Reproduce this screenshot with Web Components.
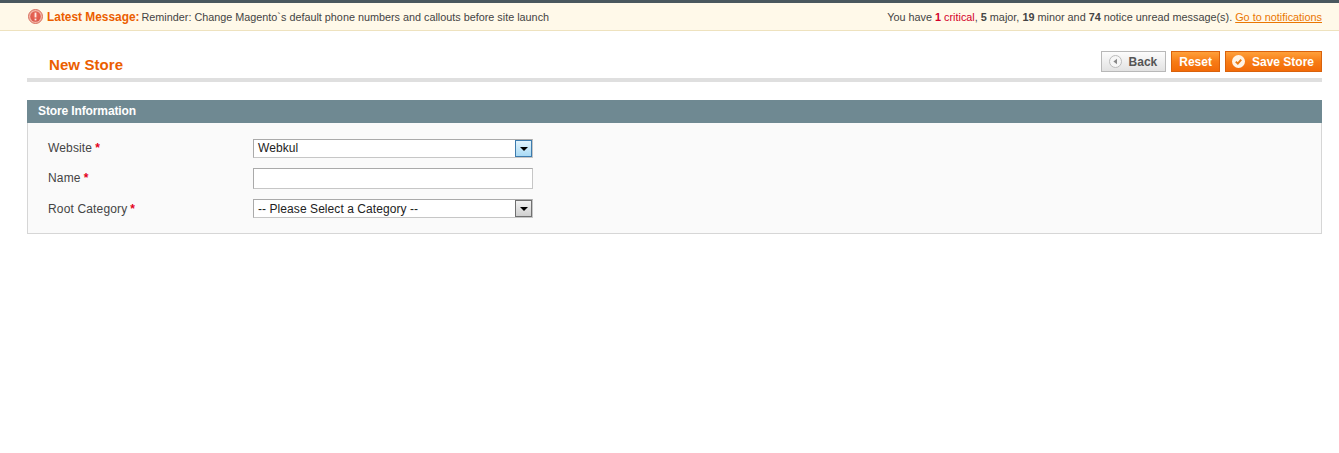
<!DOCTYPE html>
<html lang="en"><head><meta charset="utf-8"><title>New Store</title>
<style>
html,body{margin:0;padding:0;background:#fff}
body{font:12px "Liberation Sans",Arial,sans-serif;color:#2f2f2f;height:453px;overflow:hidden}
</style></head><body>
<admin-notice></admin-notice>
<main-content></main-content>
<script>
function el(name,html){customElements.define(name,class extends HTMLElement{constructor(){super();this.attachShadow({mode:'open'}).innerHTML=typeof html==='function'?html(this):html;}});}
el('admin-notice',`<style>
:host{display:block;border-top:3px solid #4a585e;background:#fff9e9;border-bottom:1px solid #eee2be;font-size:10.85px;color:#444}
.w{display:flex;justify-content:space-between;align-items:center;height:27px;padding:0 17px 0 28px}
.l{display:flex;align-items:center}
svg{margin-right:4px}
b.t{color:#eb5e00;font-size:11.9px;margin-right:2px}
.l span{font-size:10.82px}
b{color:#444}.c{color:#d4002a}b.c{color:#d4002a}
a{color:#ea7601;text-decoration:underline}
</style><div class="w"><div class="l"><svg width="15" height="15" viewBox="0 0 15 15"><defs><radialGradient id="g" cx=".5" cy=".4" r=".6"><stop offset="0" stop-color="#ee6a5a"/><stop offset="1" stop-color="#d9564a"/></radialGradient></defs><circle cx="7.5" cy="7.5" r="7" fill="#f3b6a8" stroke="#d8705f"/><circle cx="7.5" cy="7.5" r="5.2" fill="url(#g)"/><rect x="6.6" y="3.6" width="1.8" height="4.8" fill="#fde9e4"/><rect x="6.6" y="9.6" width="1.8" height="1.8" fill="#fde9e4"/></svg><b class="t">Latest Message:</b><span>Reminder: Change Magento\`s default phone numbers and callouts before site launch</span></div>
<div>You have <b class="c">1</b> <span class="c">critical</span>, <b>5</b> major, <b>19</b> minor and <b>74</b> notice unread message(s). <a href="#">Go to notifications</a></div></div>`);
el('admin-button',t=>{const k=t.getAttribute('kind')||'';const icon=t.getAttribute('icon');
const ic=icon==='back'?`<svg width="13" height="13" viewBox="0 0 13 13"><circle cx="6.5" cy="6.5" r="6" fill="#f6f6f6" stroke="#bbb"/><path d="M8 3.8v5.4L4.4 6.5z" fill="#888"/></svg>`:icon==='save'?`<svg width="13" height="13" viewBox="0 0 13 13"><circle cx="6.5" cy="6.5" r="6.5" fill="#fff4e6"/><path d="M3.8 6.6l2 2 3.4-4" fill="none" stroke="#ea7a12" stroke-width="2"/></svg>`:'';
return `<style>
:host{display:inline-flex}
.b{display:flex;align-items:center;height:19px;border:1px solid #d9620c;background:linear-gradient(#ffa03a,#f77c16 50%,#f26a08);color:#fff;font:bold 12px "Liberation Sans",Arial,sans-serif;padding:0 ${icon==='back'?8:7}px 0 ${icon==='save'?6:7}px}
.b.g{border-color:#b8b8b8;background:linear-gradient(#fcfcfc,#e2e2e2);color:#555}
svg{margin-right:7px}
</style><div class="b ${k==='grey'?'g':''}">${ic}<slot></slot></div>`});
el('page-head',`<style>
:host{display:flex;justify-content:space-between;align-items:flex-start;border-bottom:4px solid #dfdfdf;margin:0 17px 0 27px;height:47px}
h3{margin:25px 0 0 22px;font:bold 15px/18px "Liberation Sans",Arial,sans-serif;color:#eb5e00;letter-spacing:.1px}
.a{display:flex;gap:5px;margin-top:20px}
</style><h3><slot name="title"></slot></h3><div class="a"><slot></slot></div>`);
el('form-panel',`<style>
:host{display:block;margin:18px 17px 0 27px}
.h{background:#6f8992;color:#fff;font:bold 12px/22px "Liberation Sans",Arial,sans-serif;letter-spacing:-.12px;padding:0 11px;height:23px}
.b{box-sizing:border-box;background:#fafafa;border:1px solid #d6d6d6;border-top:0;padding:16px 20px 0;display:flex;flex-direction:column;gap:10px;height:111px}
</style><div class="h"><slot name="title"></slot></div><div class="b"><slot></slot></div>`);
el('form-row',t=>`<style>
:host{display:grid;grid-template-columns:205px 280px;align-items:start;color:#444;letter-spacing:.15px}
.l{line-height:18px;padding-top:${t.getAttribute('pt')||0}px}
i{color:#e3001b;font-style:normal;font-weight:bold;margin-left:3px}
.f{display:flex;letter-spacing:.07px}
</style><div class="l">${t.getAttribute('label')}<i>*</i></div><div class="f"><slot></slot></div>`);
el('select-box',t=>{const a=t.hasAttribute('active');return `<style>
:host{display:block;width:100%}
.s{box-sizing:border-box;height:19px;border:1px solid #aaa;border-right-color:#c6c6c6;border-bottom-color:#c6c6c6;background:#fff;display:flex;align-items:center;justify-content:space-between;padding:0 0 0 4px;color:#222;font:12px "Liberation Sans",Arial,sans-serif}
.s span{padding-bottom:${a?2:0}px}
.a{box-sizing:border-box;width:17px;height:17px;display:flex;align-items:center;justify-content:center;border:1px solid ${a?'#3d7bad':'#707070'};background:${a?'linear-gradient(#e3f4fc,#a9daf5)':'linear-gradient(#f2f2f2,#cfcfcf)'}}
.a::after{content:"";border:4px solid transparent;border-top:4px solid #000;border-bottom:0;width:0;height:0;margin-top:1px}
</style><div class="s"><span><slot></slot></span><div class="a"></div></div>`});
el('text-box',`<style>:host{display:block;width:100%;box-sizing:border-box;height:21px;border:1px solid #c6c6c6;border-top-color:#aaa;border-left-color:#aaa;background:#fff}</style>`);
el('main-content',`<style>:host{display:block}</style>
<page-head><span slot="title">New Store</span><admin-button kind="grey" icon="back">Back</admin-button><admin-button>Reset</admin-button><admin-button icon="save">Save Store</admin-button></page-head>
<form-panel><span slot="title">Store Information</span>
<form-row label="Website"><select-box active>Webkul</select-box></form-row>
<form-row label="Name" pt="1"><text-box></text-box></form-row>
<form-row label="Root Category" pt="1"><select-box>-- Please Select a Category --</select-box></form-row>
</form-panel>`);
</script>
</body></html>
